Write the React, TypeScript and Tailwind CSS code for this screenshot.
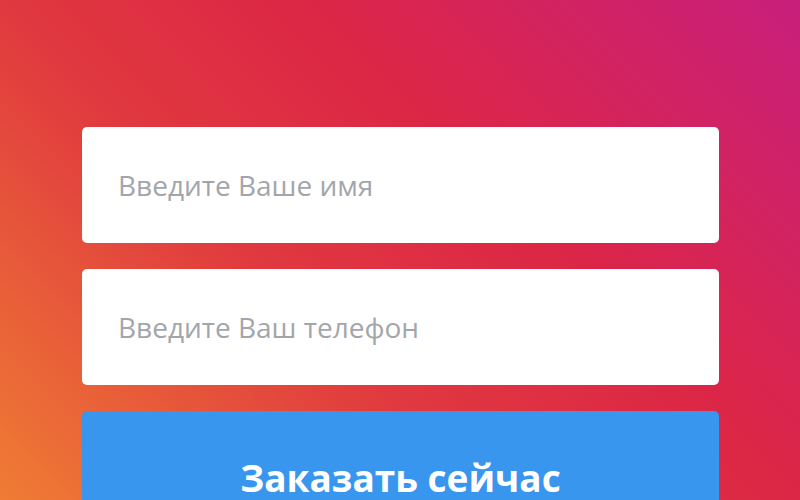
import React from "react";

export default function App() {
  return (
    <div
      className="h-[500px] w-full overflow-hidden bg-[linear-gradient(45deg,#ef7c34_0%,#e0393f_38%,#dc2646_62%,#c81f7c_100%)]"
      style={{ fontFamily: '"Open Sans", "Noto Sans", sans-serif' }}
    >
      <form className="flex flex-col gap-[27px] pl-[82px] pr-[81px] pt-[127px]">
        <input
          type="text"
          placeholder="Введите Ваше имя"
          className="h-[116px] w-full rounded-[5px] bg-white pl-[36px] text-[28px] text-gray-700 outline-none placeholder:text-[#a2a6ab]"
        />
        <input
          type="tel"
          placeholder="Введите Ваш телефон"
          className="-mt-px h-[116px] w-full rounded-[5px] bg-white pl-[36px] text-[28px] text-gray-700 outline-none placeholder:text-[#a2a6ab]"
        />
        <button
          type="button"
          className="-mt-px flex h-[116px] w-full items-center justify-center rounded-[5px] bg-[#3996ee] pt-[16px] text-[37px] font-bold leading-none text-white"
        >
          Заказать сейчас
        </button>
      </form>
    </div>
  );
}
